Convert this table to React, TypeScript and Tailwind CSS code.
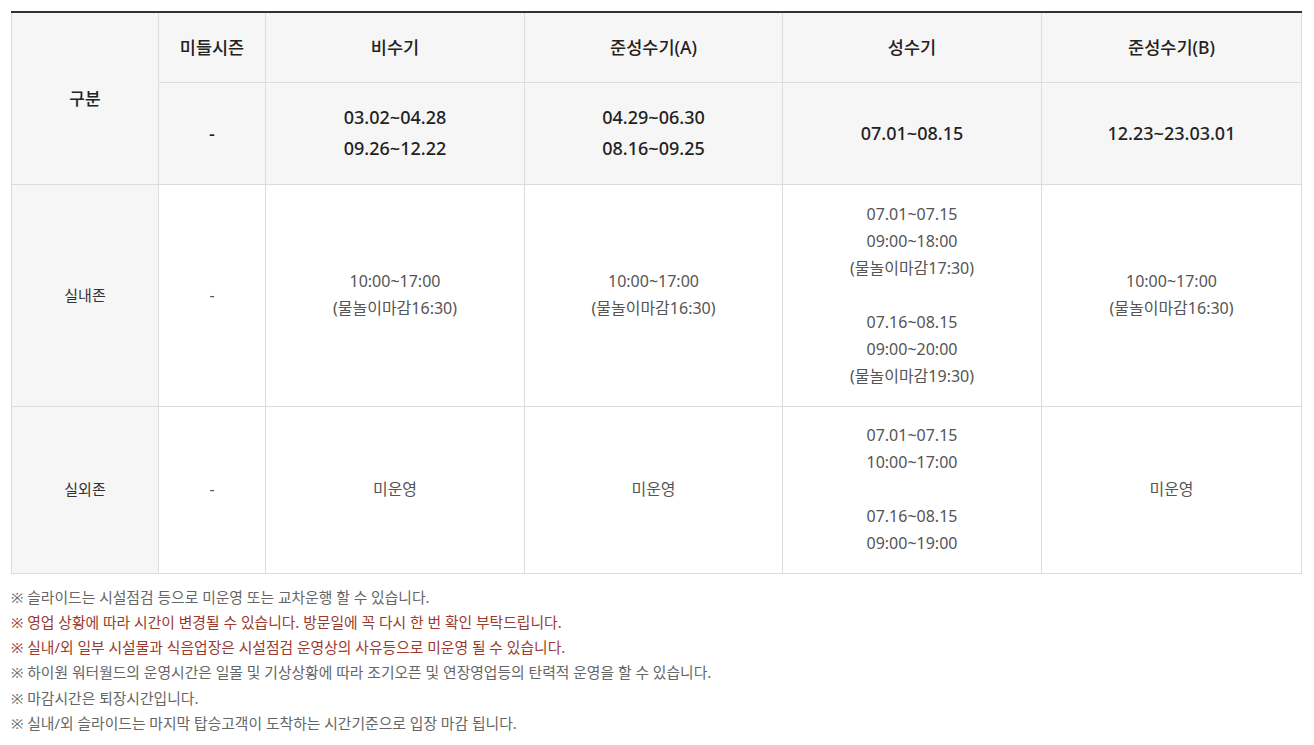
const font = { fontFamily: '"Noto Sans", "Noto Sans CJK KR", sans-serif' };

const Th = ({ children, className = '', rowSpan }: { children: React.ReactNode; className?: string; rowSpan?: number }) => (
    <th rowSpan={rowSpan} className={`border border-[#dcdcdc] bg-[#f6f6f6] text-center align-middle font-medium text-[#222] ${className}`}>
        {children}
    </th>
);

const Td = ({ children }: { children: React.ReactNode }) => (
    <td className="border border-[#dcdcdc] text-center align-middle text-[16px] leading-[27px] text-[#555]">{children}</td>
);

const notes = [
    { text: '※ 슬라이드는 시설점검 등으로 미운영 또는 교차운행 할 수 있습니다.', red: false },
    { text: '※ 영업 상황에 따라 시간이 변경될 수 있습니다. 방문일에 꼭 다시 한 번 확인 부탁드립니다.', red: true },
    { text: '※ 실내/외 일부 시설물과 식음업장은 시설점검 운영상의 사유등으로 미운영 될 수 있습니다.', red: true },
    { text: '※ 하이원 워터월드의 운영시간은 일몰 및 기상상황에 따라 조기오픈 및 연장영업등의 탄력적 운영을 할 수 있습니다.', red: false },
    { text: '※ 마감시간은 퇴장시간입니다.', red: false },
    { text: '※ 실내/외 슬라이드는 마지막 탑승고객이 도착하는 시간기준으로 입장 마감 됩니다.', red: false },
];

export default function App() {
    return (
        <div className="min-h-screen bg-white px-[11px] pt-[11px]" style={font}>
            <table className="w-[1290px] table-fixed border-collapse border-t-2 border-t-[#333]">
                <colgroup>
                    <col className="w-[147px]" />
                    <col className="w-[107px]" />
                    <col className="w-[259px]" />
                    <col className="w-[258px]" />
                    <col className="w-[259px]" />
                    <col className="w-[260px]" />
                </colgroup>
                <thead>
                    <tr className="h-[70px]">
                        <Th rowSpan={2} className="border-t-0 text-[17px]">
                            구분
                        </Th>
                        <Th className="border-t-0 text-[17.5px]">미들시즌</Th>
                        <Th className="border-t-0 text-[17.5px]">비수기</Th>
                        <Th className="border-t-0 text-[17.5px]">준성수기(A)</Th>
                        <Th className="border-t-0 text-[17.5px]">성수기</Th>
                        <Th className="border-t-0 text-[17.5px]">준성수기(B)</Th>
                    </tr>
                    <tr className="h-[102px] text-[18px] leading-[31px]">
                        <Th>-</Th>
                        <Th>
                            03.02~04.28
                            <br />
                            09.26~12.22
                        </Th>
                        <Th>
                            04.29~06.30
                            <br />
                            08.16~09.25
                        </Th>
                        <Th>07.01~08.15</Th>
                        <Th>12.23~23.03.01</Th>
                    </tr>
                </thead>
                <tbody>
                    <tr className="h-[222px]">
                        <th className="border border-[#dcdcdc] bg-[#f6f6f6] text-center text-[15px] font-normal text-[#333]">실내존</th>
                        <Td>-</Td>
                        <Td>
                            10:00~17:00
                            <br />
                            (물놀이마감16:30)
                        </Td>
                        <Td>
                            10:00~17:00
                            <br />
                            (물놀이마감16:30)
                        </Td>
                        <Td>
                            07.01~07.15
                            <br />
                            09:00~18:00
                            <br />
                            (물놀이마감17:30)
                            <br />
                            <br />
                            07.16~08.15
                            <br />
                            09:00~20:00
                            <br />
                            (물놀이마감19:30)
                        </Td>
                        <Td>
                            10:00~17:00
                            <br />
                            (물놀이마감16:30)
                        </Td>
                    </tr>
                    <tr className="h-[167px]">
                        <th className="border border-[#dcdcdc] bg-[#f6f6f6] text-center text-[15px] font-normal text-[#333]">실외존</th>
                        <Td>-</Td>
                        <Td>미운영</Td>
                        <Td>미운영</Td>
                        <Td>
                            07.01~07.15
                            <br />
                            10:00~17:00
                            <br />
                            <br />
                            07.16~08.15
                            <br />
                            09:00~19:00
                        </Td>
                        <Td>미운영</Td>
                    </tr>
                </tbody>
            </table>
            <ul className="mt-[11px] text-[14.8px] leading-[25.3px]">
                {notes.map((n) => (
                    <li key={n.text} className={n.red ? 'text-[#9c3a2e]' : 'text-[#666]'}>
                        {n.text}
                    </li>
                ))}
            </ul>
        </div>
    );
}
